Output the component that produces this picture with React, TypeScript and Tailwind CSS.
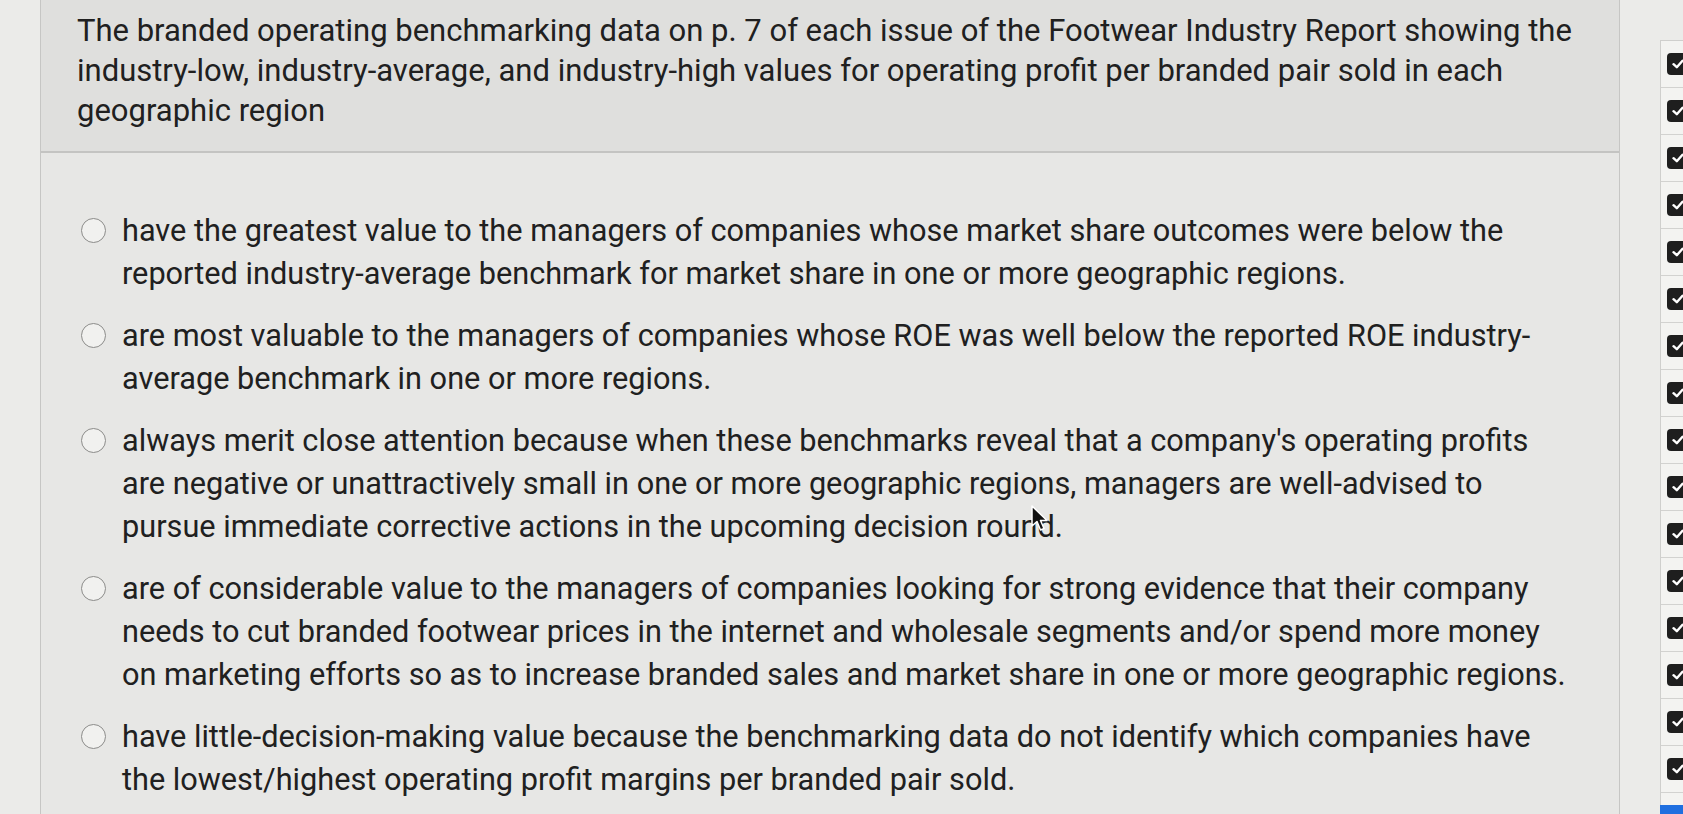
import React from "react";

const header = [
  "The branded operating benchmarking data on p. 7 of each issue of the Footwear Industry Report showing the",
  "industry-low, industry-average, and industry-high values for operating profit per branded pair sold in each",
  "geographic region",
];

const options: string[][] = [
  [
    "have the greatest value to the managers of companies whose market share outcomes were below the",
    "reported industry-average benchmark for market share in one or more geographic regions.",
  ],
  [
    "are most valuable to the managers of companies whose ROE was well below the reported ROE industry-",
    "average benchmark in one or more regions.",
  ],
  [
    "always merit close attention because when these benchmarks reveal that a company's operating profits",
    "are negative or unattractively small in one or more geographic regions, managers are well-advised to",
    "pursue immediate corrective actions in the upcoming decision round.",
  ],
  [
    "are of considerable value to the managers of companies looking for strong evidence that their company",
    "needs to cut branded footwear prices in the internet and wholesale segments and/or spend more money",
    "on marketing efforts so as to increase branded sales and market share in one or more geographic regions.",
  ],
  [
    "have little-decision-making value because the benchmarking data do not identify which companies have",
    "the lowest/highest operating profit margins per branded pair sold.",
  ],
];

function Check() {
  return (
    <div className="w-[22px] h-[22px] rounded-[4px] bg-[#1e1e1e] flex items-center justify-center">
      <svg width="14" height="14" viewBox="0 0 14 14">
        <path d="M2.5 7.2 L5.8 10.2 L11.5 3.8" fill="none" stroke="#ffffff" strokeWidth="2.4" strokeLinecap="round" strokeLinejoin="round" />
      </svg>
    </div>
  );
}

export default function App() {
  const rows = Array.from({ length: 17 });
  return (
    <div className="w-[1683px] h-[814px] overflow-hidden bg-[#e8e8e6] flex relative font-['Roboto',sans-serif] text-[#202020]">
      <div className="w-[40px] shrink-0 bg-[#ebebe9]" />
      <div className="w-[1580px] shrink-0 border-l border-r border-[#c6c6c4] flex flex-col">
        <div className="bg-[#dfdfdd] border-b-2 border-[#c4c4c2] pl-[36px] pt-[11px] pb-[20px] text-[31px] leading-[40px] whitespace-nowrap">
          {header.map((l, i) => (
            <React.Fragment key={i}>
              {l}
              {i < header.length - 1 && <br />}
            </React.Fragment>
          ))}
        </div>
        <div className="pt-[56px] pl-[40px] flex flex-col gap-[19px] bg-[#e7e7e5] flex-1">
          {options.map((lines, i) => (
            <div key={i} className="flex items-start gap-[16px]">
              <div className="mt-[9px] w-[25px] h-[25px] shrink-0 rounded-full border-[1.5px] border-[#8c8c8a] bg-[#f1f1ef]" />
              <div className="text-[30.7px] leading-[43px] whitespace-nowrap">
                {lines.map((l, j) => (
                  <React.Fragment key={j}>
                    {l}
                    {j < lines.length - 1 && <br />}
                  </React.Fragment>
                ))}
              </div>
            </div>
          ))}
        </div>
      </div>
      <div className="flex-1 bg-[#ebebe9] pt-[40px] pl-[40px]">
        <div className="flex flex-col border-l border-t border-[#cfcfcd]">
          {rows.map((_, i) => (
            <div key={i} className="h-[47px] border-b border-[#d2d2d0] bg-[#f3f3f1] flex items-center pl-[6px]">
              <Check />
            </div>
          ))}
        </div>
      </div>
      <div className="absolute left-[1660px] top-[805px] w-[30px] h-[12px] bg-[#1f6fe0]" />
      <svg className="absolute left-[1031px] top-[505px]" width="18" height="28" viewBox="0 0 18 28">
        <path d="M1 1 L1 21 L6 16.5 L9.5 25 L13 23.5 L9.5 15.5 L16 15.5 Z" fill="#111111" stroke="#ffffff" strokeWidth="1.5" strokeLinejoin="round" />
      </svg>
    </div>
  );
}
